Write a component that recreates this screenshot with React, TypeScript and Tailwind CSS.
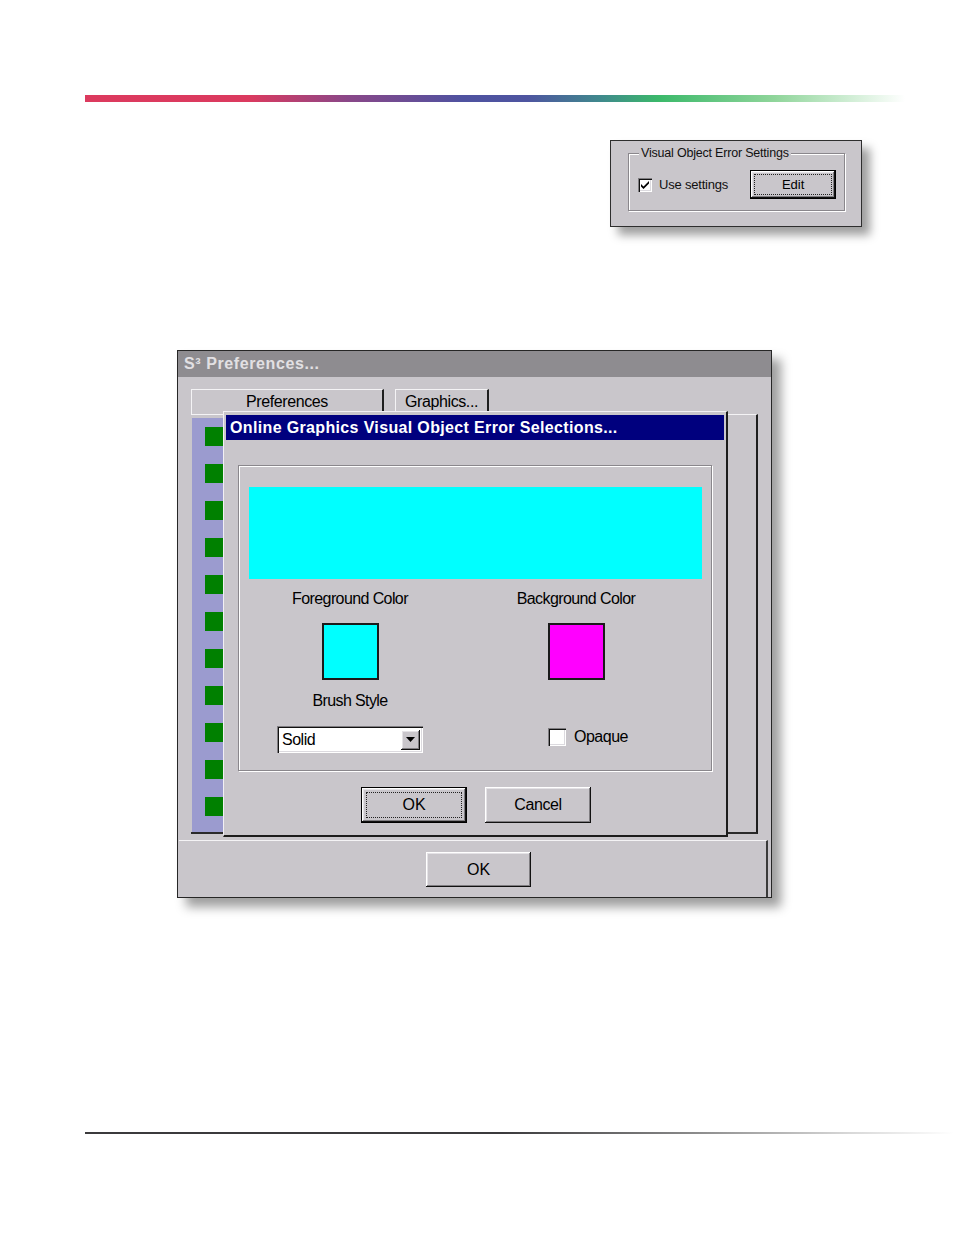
import React from "react";

const raised =
  "bg-[#c9c6cb] shadow-[inset_-1px_-1px_0_#111111,inset_1px_1px_0_#ffffff,inset_-2px_-2px_0_#7f7d81,inset_2px_2px_0_#e4e2e6]";
const sunken =
  "shadow-[inset_1px_1px_0_#7f7d81,inset_2px_2px_0_#111111,inset_-1px_-1px_0_#ffffff,inset_-2px_-2px_0_#dcdadf]";

function Check() {
  return (
    <svg width="10" height="10" viewBox="0 0 10 10">
      <path d="M1 4 L3.5 6.5 L9 1 L9 3.5 L3.5 9 L1 6.5 Z" fill="#000" />
    </svg>
  );
}

export default function App() {
  const squares = Array.from({ length: 11 });
  return (
    <div className="w-[954px] h-[1235px] bg-white overflow-hidden font-['Liberation_Sans',Arial,sans-serif] text-black">
      {/* header gradient bar */}
      <div className="pt-[95px] pl-[85px]">
        <div className="w-[820px] h-[7px] bg-[linear-gradient(to_right,#dc3a5e_0%,#db3a5f_20%,#8a4788_32%,#4f52a0_46%,#4e55a0_54%,#3f8a8c_63%,#3bb96a_70%,#8fd59a_84%,#ffffff_100%)]" />
      </div>

      {/* small settings panel */}
      <div className="mt-[38px] ml-[610px] w-[252px] h-[87px] border border-[#2e2e2e] bg-[#c9c6cb] shadow-[8px_8px_9px_rgba(0,0,0,0.38)] pt-[12px] pl-[17px]">
        <div className="relative w-[217px] h-[58px] border border-[#8a878c] shadow-[1px_1px_0_#ffffff,inset_1px_1px_0_#ffffff]">
          <span className="absolute left-[10px] top-[-9px] bg-[#c9c6cb] px-[2px] text-[12.5px] leading-[16px] tracking-[-0.2px] text-[#111]">
            Visual Object Error Settings
          </span>
          <div className="flex items-center pl-[9px] pt-[16px]">
            <div className={`w-[14px] h-[14px] bg-white flex items-center justify-center ${sunken}`}>
              <Check />
            </div>
            <span className="ml-[7px] text-[13px] tracking-[-0.2px] text-[#111]">Use settings</span>
            <div className="ml-[22px] w-[86px] h-[29px] border border-black">
              <div className={`w-full h-full ${raised} p-[3px]`}>
                <div className="w-full h-full border border-dotted border-[#222] flex items-center justify-center text-[13px]">
                  Edit
                </div>
              </div>
            </div>
          </div>
        </div>
      </div>

      {/* main preferences window */}
      <div className="mt-[123px] ml-[177px] w-[595px] h-[548px] border border-[#262626] bg-[#c9c6cb] shadow-[9px_9px_10px_rgba(0,0,0,0.38)] relative">
        <div className="h-[26px] bg-[#8e8c90] pl-[6px] flex items-center text-[16px] font-bold text-[#e2e0e3] tracking-[0.6px]">
          S³ Preferences...
        </div>
        {/* tabs */}
        <div className="flex pl-[13px] mt-[12px]">
          <div className="w-[193px] h-[25px] border-t border-l border-[#f4f3f5] border-r-2 border-r-[#1e1e1e] flex items-center justify-center text-[16px] leading-none tracking-[-0.4px]">
            Preferences
          </div>
          <div className="ml-[11px] w-[94px] h-[25px] border-t border-l border-[#f4f3f5] border-r-2 border-r-[#1e1e1e] flex items-center justify-center text-[16px] leading-none tracking-[-0.4px]">
            Graphics...
          </div>
        </div>
        {/* tab panel */}
        <div className="ml-[13px] w-[567px] h-[420px] border-t border-[#f4f3f5] border-r-2 border-r-[#1e1e1e] border-b-2 border-b-[#2a2a2a] pt-[3px] flex">
          <div className="ml-[1px] w-[31px] h-[414px] bg-[#9b9bcf] flex flex-col pt-[9px] gap-[18px] items-end">
            {squares.map((_, i) => (
              <div key={i} className="w-[18px] h-[19px] bg-[#008000]" />
            ))}
          </div>
        </div>
        {/* bottom section */}
        <div className="mt-[6px] ml-[1px] w-[589px] h-[57px] border-t border-[#f4f3f5] border-r-2 border-r-[#3a3a3a] pt-[11px] pl-[247px]">
          <div className={`w-[105px] h-[35px] ${raised} flex items-center justify-center text-[16px]`}>OK</div>
        </div>

        {/* inner dialog */}
        <div className="absolute left-[45px] top-[60px] w-[505px] h-[426px] bg-[#c9c6cb] border-l border-t border-[#f2f0f4] border-r-2 border-r-[#1c1c1c] border-b-2 border-b-[#1c1c1c] pt-[3px] px-[2px]">
          <div className="h-[25px] bg-[#00007e] pl-[4px] flex items-center text-white font-bold text-[16px] tracking-[0.35px]">
            Online Graphics Visual Object Error Selections...
          </div>
          {/* group box */}
          <div className="mt-[25px] ml-[12px] w-[474px] h-[306px] border border-[#8a878c] shadow-[1px_1px_0_#ffffff,inset_1px_1px_0_#ffffff] pt-[21px] pl-[10px]">
            <div className="w-[453px] h-[92px] bg-[#00ffff]" />
            <div className="grid grid-cols-[222px_230px] -ml-[10px] mt-[10px]">
              <div className="flex flex-col items-center">
                <div className="text-[16px] leading-[20px] tracking-[-0.6px]">Foreground Color</div>
                <div className="mt-[14px] w-[57px] h-[57px] border-2 border-[#1a1a1a] bg-[#00ffff]" />
                <div className="mt-[11px] text-[16px] leading-[20px] tracking-[-0.6px]">Brush Style</div>
                <div className={`mt-[15px] w-[146px] h-[27px] bg-white ${sunken} flex items-center justify-between pl-[5px] pr-[3px]`}>
                  <span className="text-[16px] tracking-[-0.5px]">Solid</span>
                  <div className={`w-[19px] h-[20px] ${raised} flex items-center justify-center`}>
                    <svg width="9" height="5" viewBox="0 0 9 5">
                      <path d="M0 0 H9 L4.5 5 Z" fill="#000" />
                    </svg>
                  </div>
                </div>
              </div>
              <div className="flex flex-col items-center">
                <div className="text-[16px] leading-[20px] tracking-[-0.6px]">Background Color</div>
                <div className="mt-[14px] w-[57px] h-[57px] border-2 border-[#1a1a1a] bg-[#ff00ff]" />
                <div className="mt-[45px] self-start ml-[87px] flex items-center">
                  <div className={`w-[18px] h-[18px] bg-white ${sunken}`} />
                  <span className="ml-[8px] text-[16px] tracking-[-0.5px]">Opaque</span>
                </div>
              </div>
            </div>
          </div>
          {/* buttons */}
          <div className="mt-[16px] flex pl-[135px]">
            <div className="w-[106px] h-[36px] border border-black">
              <div className={`w-full h-full ${raised} p-[4px]`}>
                <div className="w-full h-full border border-dotted border-[#222] flex items-center justify-center text-[16px]">
                  OK
                </div>
              </div>
            </div>
            <div className={`ml-[18px] w-[106px] h-[36px] ${raised} flex items-center justify-center text-[16px] tracking-[-0.4px]`}>
              Cancel
            </div>
          </div>
        </div>
      </div>

      {/* bottom line */}
      <div className="mt-[234px] ml-[85px] w-[869px] h-[2px] bg-[linear-gradient(to_right,#3b3a3c_0%,#3b3a3c_48%,#8a8a8a_70%,#d8d8d8_88%,#ffffff_100%)]" />
    </div>
  );
}
